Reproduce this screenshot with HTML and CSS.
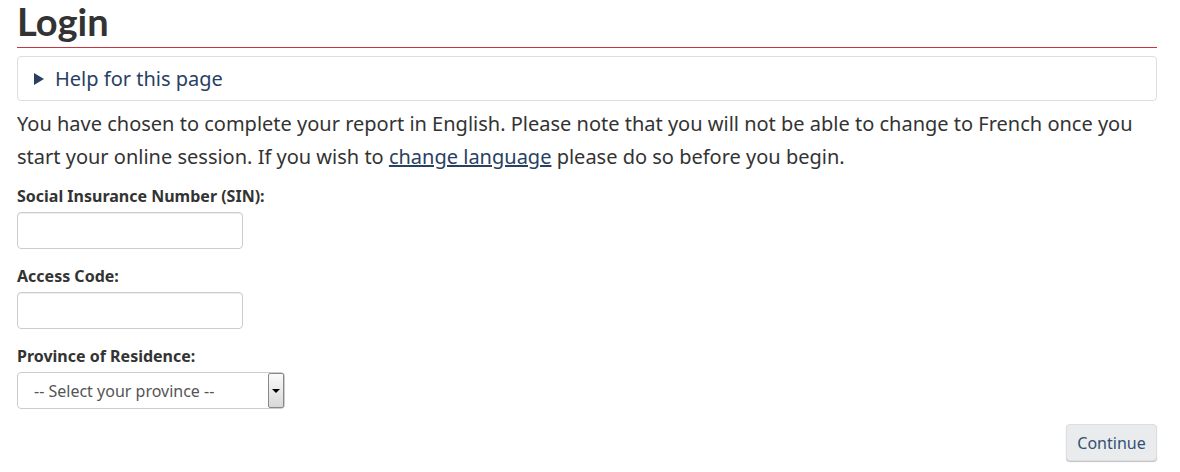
FILE: index.html
```html
<!DOCTYPE html>
<html lang="en">
<head>
<meta charset="utf-8">
<title>Login</title>
<link rel="stylesheet" href="styles.css">
</head>
<body>
<main class="container">
  <h1 class="title">Login</h1>
  <div class="rule"></div>
  <details class="help">
    <summary class="help-summary"><span class="tri"></span>Help for this page</summary>
  </details>
  <p class="intro">You have chosen to complete your report in English. Please note that you will not be able to change to French once you start your online session. If you wish to <a href="#" class="link">change language</a> please do so before you begin.</p>
  <form class="form">
    <div class="field">
      <label class="label" for="sin">Social Insurance Number (SIN):</label>
      <input class="input" id="sin" type="text">
    </div>
    <div class="field">
      <label class="label" for="code">Access Code:</label>
      <input class="input" id="code" type="text">
    </div>
    <div class="field">
      <label class="label" for="prov">Province of Residence:</label>
      <div class="select-wrap">
        <select class="select" id="prov">
          <option>-- Select your province --</option>
        </select>
        <span class="select-btn"><span class="select-arrow"></span></span>
      </div>
    </div>
    <div class="actions">
      <button type="button" class="btn">Continue</button>
    </div>
  </form>
</main>
</body>
</html>
```

FILE: styles.css
```css
html, body {
  margin: 0;
  padding: 0;
  background: #fff;
}
body {
  font-family: "Noto Sans", "Open Sans", sans-serif;
  color: #333;
  width: 1180px;
  height: 472px;
  overflow: hidden;
}
.container {
  width: 1140px;
  margin-left: 17px;
}
.title {
  font-family: Lato, "Noto Sans", sans-serif;
  font-weight: 700;
  font-size: 38px;
  line-height: 42px;
  margin: 0;
  padding-bottom: 5px;
  color: #333;
}
.rule {
  height: 1px;
  background: #c4373e;
}
.help {
  margin-top: 8px;
  border: 1px solid #ddd;
  border-radius: 4px;
  box-sizing: border-box;
  height: 45px;
}
.help-summary {
  list-style: none;
  display: flex;
  align-items: center;
  height: 43px;
  padding-left: 16px;
  font-size: 20px;
  color: #284162;
  cursor: pointer;
}
.help-summary::-webkit-details-marker { display: none; }
.tri {
  display: inline-block;
  width: 0;
  height: 0;
  border-top: 6px solid transparent;
  border-bottom: 6px solid transparent;
  border-left: 10px solid #284162;
  margin-right: 11px;
  margin-top: 1px;
}
.intro {
  font-size: 20px;
  line-height: 33px;
  margin: 6px 0 0 0;
}
.link {
  color: #284162;
  text-decoration: underline;
}
.form {
  margin-top: 11px;
}
.field {
  display: flex;
  flex-direction: column;
  align-items: flex-start;
  margin-bottom: 15px;
}
.label {
  font-weight: 700;
  font-size: 16px;
  line-height: 24px;
  margin-bottom: 4px;
  color: #333;
}
.input {
  width: 226px;
  height: 37px;
  box-sizing: border-box;
  border: 1px solid #ccc;
  border-radius: 4px;
  padding: 6px 12px;
  font-size: 16px;
  font-family: inherit;
  box-shadow: inset 0 1px 1px rgba(0,0,0,0.075);
  margin: 0;
}
.select-wrap {
  position: relative;
  width: 268px;
  height: 37px;
}
.select {
  -webkit-appearance: none;
  appearance: none;
  width: 268px;
  height: 37px;
  box-sizing: border-box;
  border: 1px solid #ccc;
  border-radius: 4px;
  background: #fff;
  padding: 0 16px;
  font-family: inherit;
  font-size: 16px;
  color: #555;
  margin: 0;
}
.select-btn {
  position: absolute;
  right: 1px;
  top: 1px;
  width: 16px;
  height: 35px;
  box-sizing: border-box;
  border: 1px solid #888;
  border-radius: 2px;
  background: linear-gradient(#fafafa, #d8d8d8);
  display: flex;
  align-items: center;
  justify-content: center;
}
.select-arrow {
  width: 0;
  height: 0;
  border-left: 4px solid transparent;
  border-right: 4px solid transparent;
  border-top: 4px solid #000;
}
.actions {
  display: flex;
  justify-content: flex-end;
}
.btn {
  width: 91px;
  height: 37px;
  box-sizing: border-box;
  background: #eaebed;
  border: 1px solid #dcdee1;
  border-radius: 4px;
  color: #335075;
  font-family: inherit;
  font-size: 16px;
  padding: 0;
  box-shadow: 0 1px 1px rgba(0,0,0,0.25);
}
```
